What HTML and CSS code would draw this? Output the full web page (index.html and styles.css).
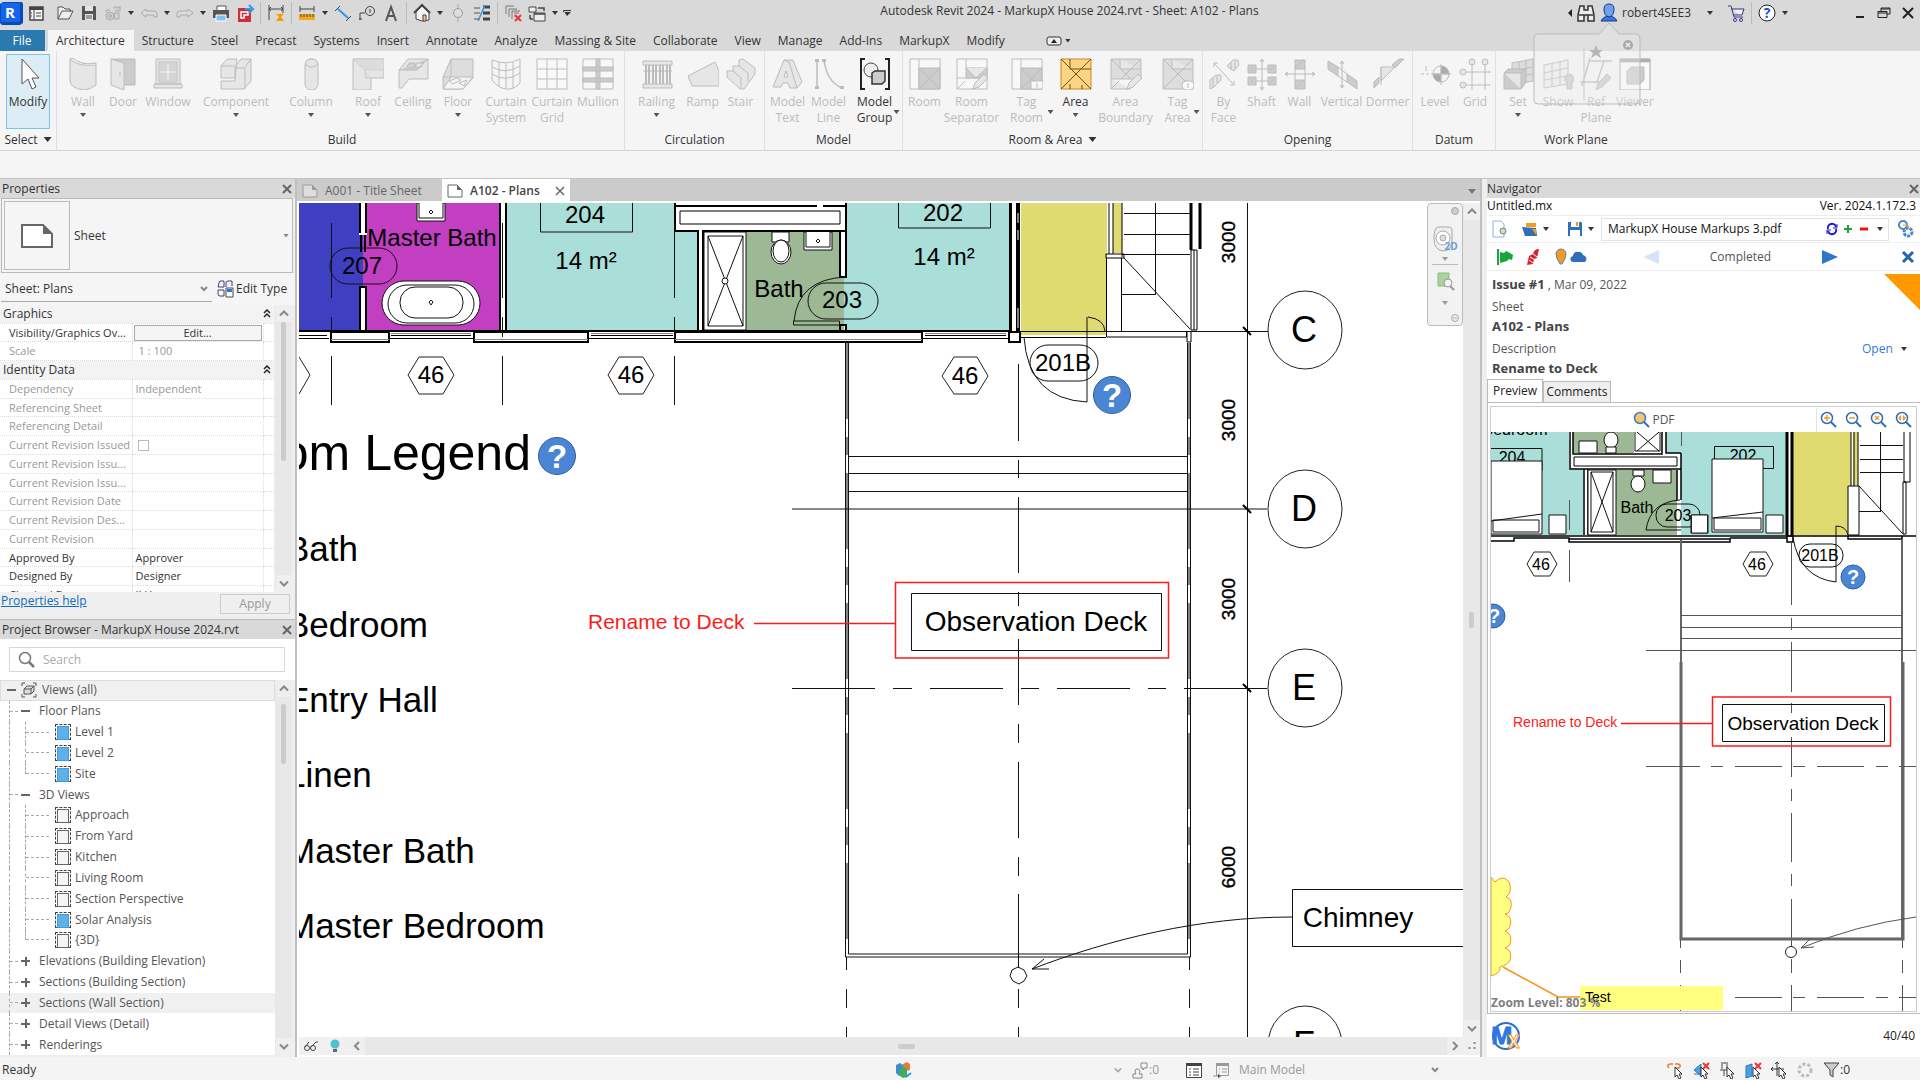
FILE: index.html
```html
<!DOCTYPE html>
<html lang="en">
<head>
    <meta charset="UTF-8">
    <meta name="viewport" content="width=device-width, initial-scale=1.0">
    <title>Autodesk Revit 2024 - MarkupX House 2024.rvt - Sheet: A102 - Plans</title>
    <link rel="stylesheet" href="styles.css">
</head>
<body>
    <header class="titlebar">
        <div class="quick-access">
            <button class="tool" aria-label="Revit"><svg width="24" height="26" viewBox="0 0 24 26"><path d="M0 4l3-2h19l1 2v19l-3 2H2l-2-2z" fill="#0a49b8"/><path d="M1 3h19v19H1z" fill="#1565ec"/><text x="10" y="18" class="logo-letter">R</text></svg></button>
            <button class="tool" aria-label="Home"><svg width="24" height="24" viewBox="0 0 24 24"><path d="M6 6h13v13H6z" fill="#f4f4f4" stroke="#444" stroke-width="1.5"/><path d="M5 6h14v3H5z" fill="#444"/><path d="M10 9v10M12 12h5M12 15h5M7 12h1M7 15h1" stroke="#444"/></svg></button>
            <button class="tool tool-first" aria-label="Open"><svg width="24" height="24" viewBox="0 0 24 24"><path d="M5 18V6h5l2 2h5v3M5 18l4-8h11l-4 8z" fill="#eee" stroke="#555"/></svg></button>
            <button class="tool" aria-label="Save"><svg width="24" height="24" viewBox="0 0 24 24"><path d="M5 5h13l1 1v13H5z" fill="#555"/><path d="M8 5h8v5H8zM8 13h8v6H8z" fill="#e4e4e4"/><path d="M9 15h6M9 17h6" stroke="#555"/></svg></button>
            <button class="tool" aria-label="Synchronize"><svg width="24" height="24" viewBox="0 0 24 24" fill="#d0d0d0" stroke="#aaa"><circle cx="9" cy="15" r="4"/><circle cx="9" cy="15" r="1.5"/><path d="M12 7q3-3 5 0l2-2v5h-5M13 12h5v6h-4zM5 11V9h4"/></svg></button>
            <span class="caret"></span>
            <button class="tool" aria-label="Undo"><svg width="24" height="24" viewBox="0 0 24 24" fill="#ddd" stroke="#aaa"><path d="M4 12l5-4v2h8q3 0 3 3v3h-3v-2H9v2z"/></svg></button>
            <span class="caret"></span>
            <button class="tool" aria-label="Redo"><svg width="24" height="24" viewBox="0 0 24 24" fill="#ddd" stroke="#aaa"><path d="M20 12l-5-4v2H7q-3 0-3 3v3h3v-2h8v2z"/></svg></button>
            <span class="caret"></span>
            <button class="tool" aria-label="Print"><svg width="24" height="24" viewBox="0 0 24 24"><path d="M8 5h9v5H8z" fill="#fff" stroke="#555"/><path d="M4 9h16v8H4z" fill="#555"/><path d="M7 14h10v6H7z" fill="#7fc3f5" stroke="#fff"/></svg></button>
            <button class="tool" aria-label="Export PDF"><svg width="24" height="24" viewBox="0 0 24 24"><path d="M5 7h13v14H5z" fill="#c8313a"/><path d="M8 17v-6h7v3h-4v3z" fill="none" stroke="#fff" stroke-width="1.5"/><path d="M12 8h6M16 4l4 4-4 4" fill="none" stroke="#2b98f0" stroke-width="2"/></svg></button>
            <span class="sep"></span>
            <button class="tool" aria-label="Aligned dimension"><svg width="24" height="24" viewBox="0 0 24 24"><path d="M5 4v15M19 4v8M5 8h14M7 6L5 8l2 2M17 6l2 2-2 2" fill="none" stroke="#444"/><path d="M12 13h8l-3 3 3 4h-8l3-4z" fill="#f59a00"/></svg></button>
            <span class="sep"></span>
            <button class="tool" aria-label="Measure"><svg width="24" height="24" viewBox="0 0 24 24"><path d="M5 5v6M19 5v6M5 8h14" stroke="#444"/><path d="M4 13h16v6H4z" fill="#f5a81c"/><path d="M6 13v3M9 13v3M12 13v3M15 13v3M18 13v3" stroke="#444"/></svg></button>
            <span class="caret"></span>
            <button class="tool" aria-label="Dimension"><svg width="24" height="24" viewBox="0 0 24 24"><path d="M4 10l5-5M15 20l5-5" stroke="#444"/><path d="M7 8l10 9" stroke="#2b98f0" stroke-width="2"/></svg></button>
            <button class="tool" aria-label="Tag"><svg width="24" height="24" viewBox="0 0 24 24" fill="none" stroke="#444"><circle cx="15" cy="10" r="4.5"/><path d="M15 8v4M5 19v-7h5M4 18h3"/></svg></button>
            <button class="tool" aria-label="Text"><svg width="24" height="24" viewBox="0 0 24 24" fill="none" stroke="#555" stroke-width="2"><path d="M7 20l5-14 5 14M9 15h6"/></svg></button>
            <span class="sep"></span>
            <button class="tool" aria-label="Default 3D view"><svg width="24" height="24" viewBox="0 0 24 24"><path d="M6 11l6-6 7 6v8l-7 1-6-2z" fill="#f4f4f4" stroke="#444"/><path d="M4 12l8-8 8 8" fill="none" stroke="#444" stroke-width="2"/><path d="M13 14h3v6h-3z" fill="#f5c86a" stroke="#444"/></svg></button>
            <span class="caret"></span>
            <button class="tool" aria-label="Section"><svg width="24" height="24" viewBox="0 0 24 24"><path d="M12 3v18M7 12l5-5 5 5" stroke="#aaa" fill="#bbb"/><circle cx="12" cy="12" r="4.5" fill="#ddd" stroke="#999"/></svg></button>
            <button class="tool" aria-label="Thin lines"><svg width="24" height="24" viewBox="0 0 24 24"><path d="M4 7h6M4 12h6M4 18h6" stroke="#555"/><path d="M13 6h7M13 12h7M13 18h7" stroke="#444" stroke-width="3"/><path d="M15 4L8 20" stroke="#2b98f0" stroke-width="1.5"/></svg></button>
            <span class="sep"></span>
            <button class="tool" aria-label="Close inactive views"><svg width="24" height="24" viewBox="0 0 24 24"><path d="M5 13V5h8M8 16V8h8M11 18v-8h8" fill="none" stroke="#777"/><path d="M13 12h5M13 15h3" stroke="#777"/><path d="M14 14l6 6M20 14l-6 6" stroke="#e33" stroke-width="2"/></svg></button>
            <button class="tool" aria-label="Switch windows"><svg width="24" height="24" viewBox="0 0 24 24"><path d="M4 6h7v5H4zM9 12h11v8H9z" fill="#eee" stroke="#444"/><path d="M9 13h11M13 7h6v3M5 18h3M5 14v4" stroke="#444" fill="none" stroke-width="1.5"/></svg></button>
            <span class="caret"></span>
            <span class="caret caret-wide"></span>
        </div>
        <h1 class="title">Autodesk Revit 2024 - MarkupX House 2024.rvt - Sheet: A102 - Plans</h1>
        <div class="account">
            <svg width="8" height="12" viewBox="0 0 8 12"><path d="M6 2v8L2 6z" fill="#222"/></svg>
            <button class="tool" aria-label="Search"><svg width="24" height="24" viewBox="0 0 24 24" fill="#eee" stroke="#333" stroke-width="1.5"><path d="M6 5h4v4h4V5h4l2 9v6h-6v-6h-4v6H4v-6zM5 14h5M14 14h5"/></svg></button>
            <button class="user"><svg width="22" height="24" viewBox="0 0 22 24"><path d="M3 20q1-3 6-5h4q5 2 6 5z" fill="#3a7ae0" stroke="#123a80"/><path d="M11 3q5 0 5 5 0 7-5 8-5-1-5-8 0-5 5-5z" fill="#6ea2ee" stroke="#123a80"/></svg>robert4SEE3</button>
            <span class="caret caret-user"></span>
            <button class="tool" aria-label="App store"><svg width="24" height="24" viewBox="0 0 24 24" fill="#eef" stroke="#337"><path d="M4 5h3l3 11h9M7 8h13l-2 6H9"/><circle cx="11" cy="19" r="1.5"/><circle cx="17" cy="19" r="1.5"/></svg></button>
            <span class="sep"></span>
            <button class="tool" aria-label="Help"><svg width="24" height="24" viewBox="0 0 24 24"><circle cx="12" cy="12" r="8" fill="#fff" stroke="#222"/><text x="12" y="17" class="help-mark">?</text></svg></button>
            <span class="caret"></span>
        </div>
        <div class="window-buttons">
            <button class="tool" aria-label="Minimize"><svg width="24" height="24" viewBox="0 0 24 24"><path d="M8 16h8" stroke="#222" stroke-width="2"/></svg></button>
            <button class="tool" aria-label="Restore"><svg width="24" height="24" viewBox="0 0 24 24" fill="none" stroke="#222"><path d="M9 10V7h9v6h-3M6 10.5h9v6H6zM6 12h9M9 8h9"/></svg></button>
            <button class="tool" aria-label="Close"><svg width="24" height="24" viewBox="0 0 24 24"><path d="M7 7l10 10M17 7L7 17" stroke="#222" stroke-width="2"/></svg></button>
        </div>
    </header>

    <nav class="ribbon-tabs">
        <button class="tab tab-file">File</button>
        <button class="tab tab-active">Architecture</button>
        <button class="tab">Structure</button>
        <button class="tab">Steel</button>
        <button class="tab">Precast</button>
        <button class="tab">Systems</button>
        <button class="tab">Insert</button>
        <button class="tab">Annotate</button>
        <button class="tab">Analyze</button>
        <button class="tab">Massing &amp; Site</button>
        <button class="tab">Collaborate</button>
        <button class="tab">View</button>
        <button class="tab">Manage</button>
        <button class="tab">Add-Ins</button>
        <button class="tab">MarkupX</button>
        <button class="tab">Modify</button>
        <button class="tab tab-toggle" aria-label="Minimize ribbon"><svg width="16" height="10" viewBox="0 0 16 10"><rect x="1" y="1" width="14" height="8" rx="2" fill="#eee" stroke="#333"/><path d="M5 7h6L8 3z" fill="#222"/></svg><span class="caret"></span></button>
    </nav>

    <section class="ribbon">
        <div class="group group-select">
            <div class="buttons">
                <button class="big modify"><svg class="on" viewBox="0 0 32 32"><path d="M10 1v25l6-5 4 10 4-2-4-9h7z" fill="#fff" stroke="#555"/></svg><span>Modify</span></button>
            </div>
            <h2>Select <i class="caret-down"></i></h2>
        </div>
        <div class="group group-build">
            <div class="buttons">
                <button class="big w40" disabled><svg viewBox="0 0 32 32"><path d="M3 1q8 8 26 6v20q-6 5-13 5Q3 30 3 22z"/><path d="M3 1l3-1q8 8 23 5v2"/></svg><span>Wall</span><i class="drop"></i></button>
                <button class="big w40" disabled><svg viewBox="0 0 32 32"><path d="M4 1h24v26H17" fill="#ccc"/><path d="M4 1l13 4v27L4 27zM13 14v4"/></svg><span>Door</span></button>
                <button class="big w50" disabled><svg viewBox="0 0 32 32"><path d="M4 1h24v25H4zM7 4h18v20H7zM2 26h28v4H2z"/><path d="M8 5h7v8H8zM17 5h7v8h-7zM8 15h7v8H8zM17 15h7v8h-7z" fill="#d4d4d4" stroke="none"/></svg><span>Window</span></button>
                <button class="big w86" disabled><svg viewBox="0 0 32 32"><path d="M1 8l6-7h10l-2 19H1zM1 23h14V9l6-8h10v22l-7 8H1zM15 10h10V31M1 8h13M25 9l6-8"/></svg><span>Component</span><i class="drop"></i></button>
                <button class="big w64" disabled><svg viewBox="0 0 32 32"><rect x="10" y="1" width="13" height="31" rx="6"/><ellipse cx="16.5" cy="5" rx="6" ry="4"/></svg><span>Column</span><i class="drop"></i></button>
                <button class="big w50" disabled><svg viewBox="0 0 32 32"><path d="M1 1h31v19H19v12H1z"/><path d="M1 1l12 11h19V1zM13 12v8h6" fill="#dcdcdc" stroke-width=".5"/></svg><span>Roof</span><i class="drop"></i></button>
                <button class="big w40" disabled><svg viewBox="0 0 32 32"><path d="M2 12L11 1h20v20H12l-7 9H2z"/><path d="M2 12h18l11-11M12 5h6l-2 4h-6zM20 5h6l-2 4h-6z" fill="#ccc"/></svg><span>Ceiling</span></button>
                <button class="big w50" disabled><svg viewBox="0 0 32 32"><path d="M9 1h22v19L21 31H1V19L9 1zM9 1v18H1" fill="#ddd"/><path d="M9 19h22L21 31H1zM7 23l8-3 4 2-8 4zM17 25l8-3-3 6z" fill="#f4f4f4"/></svg><span>Floor</span><i class="drop"></i></button>
                <button class="big w46" disabled><svg viewBox="0 0 32 32"><path d="M2 2q15 6 28-1v24q-6 7-14 6T2 22zM2 9q14 8 28-1M2 16q14 9 28-1M9 4v24M16 5v26M23 4v26" fill="none"/></svg><span>Curtain<br>System</span></button>
                <button class="big w46" disabled><svg viewBox="0 0 32 32"><path d="M1 1h30v30H1zM11 1v30M21 1v30M1 11h30M1 21h30" fill="#f8f8f8"/></svg><span>Curtain<br>Grid</span></button>
                <button class="big w46" disabled><svg viewBox="0 0 32 32"><path d="M1 1h30v30H1z" fill="#f8f8f8"/><path d="M1 9h30v4H1zM1 20h30v4H1zM14 1h4v30h-4z" fill="#ccc"/></svg><span>Mullion</span></button>
            </div>
            <h2>Build</h2>
        </div>
        <div class="group group-circulation">
            <div class="buttons">
                <button class="big w54" disabled><svg viewBox="0 0 32 32"><path d="M2 3h29v4H2zM2 26h29v4H2z"/><path d="M5 7v19M8 7v19M12 7v19M15 7v19M19 7v19M22 7v19M26 7v19M29 7v19" stroke-width="2"/><path d="M2 13h29"/></svg><span>Railing</span><i class="drop"></i></button>
                <button class="big w38" disabled><svg viewBox="0 0 32 32"><path d="M1 18L28 4l4 9v15H5z"/></svg><span>Ramp</span></button>
                <button class="big w38" disabled><svg viewBox="0 0 32 32"><path d="M14 2l4-1 12 9v6L19 31h-4L2 19v-6h6V8h6z"/><path d="M8 13l8 7v10M14 8l9 7v8" fill="none"/></svg><span>Stair</span></button>
            </div>
            <h2>Circulation</h2>
        </div>
        <div class="group group-model">
            <div class="buttons">
                <button class="big w42" disabled><svg viewBox="0 0 32 32"><path d="M1 29L12 2h9l9 22-5 6h-7l-2-5h-5l-2 4zM12 19h4l-2-6z"/><path d="M12 2l5 2 8 26" fill="none"/></svg><span>Model<br>Text</span></button>
                <button class="big w40" disabled><svg viewBox="0 0 32 32"><path d="M4 2v28M11 2q3 22 18 28" fill="none" stroke-width="1.5"/><path d="M2 1h4v3H2zM9 1h4v3H9zM2 28h4v3H2zM27 28h4v3h-4z" fill="#bbb" stroke="none"/></svg><span>Model<br>Line</span></button>
                <button class="big w52"><svg class="on" viewBox="0 0 32 32"><path d="M6 1H2v30h4M26 1h4v30h-4" fill="none" stroke="#222" stroke-width="2"/><circle cx="12" cy="12" r="7" fill="#eee" stroke="#444"/><path d="M13 15l3-2h10v10l-3 3H13z" fill="#ccc" stroke="#333" stroke-width="1.5"/></svg><span>Model<br>Group</span><i class="drop drop-side"></i></button>
            </div>
            <h2>Model</h2>
        </div>
        <div class="group group-room">
            <div class="buttons">
                <button class="big w40" disabled><svg viewBox="0 0 32 32"><path d="M1 1h30v30H1zM10 1v30" fill="#f8f8f8"/><path d="M10 10h21v21H10z" fill="#ccc"/><path d="M10 10l21 21M31 10L10 31"/></svg><span>Room</span></button>
                <button class="big w54" disabled><svg viewBox="0 0 32 32"><path d="M1 1h30v30H1zM10 1v9M1 20h30M1 31l8-8" fill="#f8f8f8"/><path d="M10 10h21v10H10z" fill="#ccc"/><path d="M10 10l10 10 11-10M17 31l2-6 9-9 4 4-9 9z"/></svg><span>Room<br>Separator</span></button>
                <button class="big w56" disabled><svg viewBox="0 0 32 32"><path d="M1 1h30v30H1zM10 1v30" fill="#f8f8f8"/><path d="M10 10h21v21H10z" fill="#ccc"/><path d="M10 10l21 21M31 10L10 31"/><path d="M20 23h12v8H20z" fill="#f8f8f8"/><path d="M26 25v5"/></svg><span>Tag<br>Room</span><i class="drop drop-side"></i></button>
                <button class="big w42"><svg class="on" viewBox="0 0 32 32"><path d="M1 1h30v30H1z" fill="#ffd480" stroke="#c28a2a"/><path d="M10 1v10h21M10 26v5M1 1l30 30M31 1L1 31M22 31v-4" stroke="#6b4f1c" fill="none"/></svg><span>Area</span><i class="drop"></i></button>
                <button class="big w58" disabled><svg viewBox="0 0 32 32"><path d="M1 1h30v20H1z" fill="#ddd"/><path d="M1 21v10h20M1 1l20 20M31 1L11 21M10 1v10h21M1 31l8-8M17 31l2-6 9-9 4 4-9 9z"/></svg><span>Area<br>Boundary</span></button>
                <button class="big w46" disabled><svg viewBox="0 0 32 32"><path d="M1 1h30v30H1z" fill="#ddd"/><path d="M1 1l30 30M31 1L1 31M10 1v10h21"/><rect x="20" y="23" width="12" height="9" rx="4" fill="#f8f8f8"/><path d="M26 25v5"/></svg><span>Tag<br>Area</span><i class="drop drop-side"></i></button>
            </div>
            <h2>Room &amp; Area <i class="caret-down"></i></h2>
        </div>
        <div class="group group-opening">
            <div class="buttons">
                <button class="big w38" disabled><svg viewBox="0 0 32 32"><path d="M6 5l20 22M6 5v4M6 5h4M26 27v-4M26 27h-4M19 8l6-6h5l1 5-5 6zM2 22l6-5h5v5l-7 7-4 2z"/><path d="M23 4v8M27 3v8M5 20v9M9 18v7"/></svg><span>By<br>Face</span></button>
                <button class="big w38" disabled><svg viewBox="0 0 32 32"><path d="M2 7h8v8H2zM22 7h8v8h-8zM2 19h8v8H2zM22 19h8v8h-8z" fill="#ccc"/><path d="M16 2v29M14 4l2-3 2 3M14 29l2 3 2-3M4 13l4-4M4 25l4-4M24 13l4-4M24 25l4-4M10 11h12M10 23h12"/></svg><span>Shaft</span></button>
                <button class="big w38" disabled><svg viewBox="0 0 32 32"><path d="M11 2h10v9H11zM11 22h10v9H11z" fill="#ccc"/><path d="M11 10l9-8M11 30l9-8M11 11v11M21 11v11M1 16h30M4 14l-3 2 3 2M28 14l3 2-3 2"/></svg><span>Wall</span></button>
                <button class="big w46" disabled><svg viewBox="0 0 32 32"><path d="M2 3l10 6v9L2 11zM21 16l10 7v8l-10-7z" fill="#ccc"/><path d="M16 3v27M14 6l2-3 2 3M14 27l2 3 2-3M12 9l9 7M12 18l9 6"/></svg><span>Vertical</span></button>
                <button class="big w46" disabled><svg viewBox="0 0 32 32"><path d="M20 7l7-6h5l-9 9zM2 30v-6l5-5v6z" fill="#ccc"/><path d="M9 22V9h14L9 23M9 9v18"/></svg><span>Dormer</span></button>
            </div>
            <h2>Opening</h2>
        </div>
        <div class="group group-datum">
            <div class="buttons">
                <button class="big w42" disabled><svg viewBox="0 0 32 32"><circle cx="22" cy="16" r="8" fill="#f4f4f4"/><path d="M22 8a8 8 0 0 1 8 8h-8zM22 24a8 8 0 0 1-8-8h8z" fill="#aaa"/><path d="M2 16h3M7 16h3M22 6v21M12 16h20M7 8v5"/></svg><span>Level</span></button>
                <button class="big w38" disabled><svg viewBox="0 0 32 32"><path d="M13 7v25M26 7v25M7 14h25M7 27h25"/><circle cx="13" cy="4" r="3"/><circle cx="26" cy="4" r="3"/><circle cx="4" cy="14" r="3"/><circle cx="4" cy="27" r="3"/></svg><span>Grid</span></button>
            </div>
            <h2>Datum</h2>
        </div>
        <div class="group group-plane">
            <div class="buttons">
                <button class="big w42" disabled><svg viewBox="0 0 32 32"><path d="M10 5l21-4v22L10 27z" fill="#ddd"/><path d="M10 13l21-4M10 20l21-4M17 4v22M24 2v22"/><path d="M2 15l4-4h17v15l-4 5H2z" fill="#ccc"/><path d="M2 15h17v16M19 15l4-4"/></svg><span>Set</span><i class="drop"></i></button>
                <button class="big w38" disabled><svg viewBox="0 0 32 32"><path d="M2 7l24-5v24L2 30zM2 15l24-5M2 22l24-4M10 5v24M18 4v23" fill="#eee"/><path d="M27 16a5 5 0 0 1 3 9v6h-5v-6a5 5 0 0 1 2-9z" fill="#ccc"/></svg><span>Show</span></button>
                <button class="big w38" disabled><svg viewBox="0 0 32 32"><path d="M10 3h22M24 3L17 24M0 24h20M10 0L2 28" fill="none" stroke-width="1.5"/><path d="M16 32l2-7 9-9 4 4-9 9z" fill="#ccc"/></svg><span>Ref<br>Plane</span></button>
                <button class="big w40" disabled><svg viewBox="0 0 32 32"><path d="M1 1h30v31H1z" fill="#fafafa" stroke="#aaa"/><path d="M1 1h30v3H1z" fill="#aaa"/><path d="M8 13l4-4h13v13l-4 4H8z" fill="#ccc"/></svg><span>Viewer</span></button>
            </div>
            <h2>Work Plane</h2>
        </div>
        <!-- sign-in balloon fading out under the account name -->
        <svg class="balloon" width="112" height="84" viewBox="0 0 112 84"><path d="M6 12h61l10-11 10 11h17q4 0 4 4v62q0 4-4 4H6q-4 0-4-4V16q0-4 4-4z" fill="#eee" fill-opacity=".35" stroke="#bbb"/><circle cx="96" cy="23" r="5" fill="#aaa"/><path d="M94 21l4 4M98 21l-4 4" stroke="#eee" stroke-width="1.5"/><path d="M64 23l2 5h5l-4 3 2 5-5-3-5 3 2-5-4-3h5z" fill="#b5b5b5"/><path d="M52 24v55" stroke="#ccc"/></svg>
    </section>

    <main class="workspace">
        <aside class="left">
            <section class="properties">
                <h2 class="panel-title">Properties<button class="close" aria-label="Close Properties"><svg width="12" height="12" viewBox="0 0 12 12"><path d="M2 2l8 8M10 2l-8 8"/></svg></button></h2>
                <button class="type-selector">
                    <span class="thumb"><svg width="34" height="26" viewBox="0 0 34 26"><path d="M2 2h21l9 9v13H2z" fill="#fff" stroke="#666" stroke-width="2"/><path d="M23 2v9h9z" fill="#666"/></svg></span>
                    <span>Sheet</span>
                    <i class="caret caret-gray"></i>
                </button>
                <div class="instance">
                    <label class="hidden" for="instance">Instance</label>
                    <select id="instance"><option>Sheet: Plans</option></select>
                    <button class="edit-type"><svg width="18" height="18" viewBox="0 0 18 18" fill="#f4f4f4" stroke="#446"><path d="M2 3q0-2 2-2h3v6H1zM9 7V3q0-2 2-2h4v5M1 10h6v6H3q-2 0-2-2z"/><path d="M9 8h7v9H9z" fill="#fff"/><path d="M10 9h5v3h-5z" fill="#2d77d6" stroke="none"/></svg>Edit Type</button>
                </div>
                <div class="grid-wrap">
                    <div class="grid-scroll">
                        <table class="grid">
                            <colgroup><col class="col-name"><col class="col-value"><col class="col-link"></colgroup>
                            <tr class="cat"><th colspan="2">Graphics</th><td><svg class="collapse" width="8" height="10" viewBox="0 0 8 10"><path d="M1 4l3-3 3 3M1 8l3-3 3 3"/></svg></td></tr>
                            <tr><td>Visibility/Graphics Ov...</td><td class="has-button"><button class="edit">Edit...</button></td><td></td></tr>
                            <tr class="ro"><td>Scale</td><td class="scale">1 : 100</td><td></td></tr>
                            <tr class="cat"><th colspan="2">Identity Data</th><td><svg class="collapse" width="8" height="10" viewBox="0 0 8 10"><path d="M1 4l3-3 3 3M1 8l3-3 3 3"/></svg></td></tr>
                            <tr class="ro"><td>Dependency</td><td>Independent</td><td></td></tr>
                            <tr class="ro"><td>Referencing Sheet</td><td></td><td></td></tr>
                            <tr class="ro"><td>Referencing Detail</td><td></td><td></td></tr>
                            <tr class="ro"><td><label for="issued">Current Revision Issued</label></td><td><input type="checkbox" id="issued" disabled></td><td></td></tr>
                            <tr class="ro"><td>Current Revision Issu...</td><td></td><td></td></tr>
                            <tr class="ro"><td>Current Revision Issu...</td><td></td><td></td></tr>
                            <tr class="ro"><td>Current Revision Date</td><td></td><td></td></tr>
                            <tr class="ro"><td>Current Revision Des...</td><td></td><td></td></tr>
                            <tr class="ro"><td>Current Revision</td><td></td><td></td></tr>
                            <tr><td>Approved By</td><td>Approver</td><td></td></tr>
                            <tr><td>Designed By</td><td>Designer</td><td></td></tr>
                            <tr><td>Checked By</td><td>JLH</td><td></td></tr>
                        </table>
                    </div>
                    <div class="scrollbar"><svg class="chev" viewBox="0 0 10 10"><path d="M1 7l4-4 4 4"/></svg><span class="thumb-bar thumb-props"></span><svg class="chev" viewBox="0 0 10 10"><path d="M1 3l4 4 4-4"/></svg></div>
                </div>
                <div class="properties-foot">
                    <a href="#">Properties help</a>
                    <button class="apply" disabled>Apply</button>
                </div>
            </section>

            <section class="browser">
                <h2 class="panel-title">Project Browser - MarkupX House 2024.rvt<button class="close" aria-label="Close Project Browser"><svg width="12" height="12" viewBox="0 0 12 12"><path d="M2 2l8 8M10 2l-8 8"/></svg></button></h2>
                <div class="search-row">
                    <label class="search" for="search"><svg width="18" height="18" viewBox="0 0 18 18"><circle cx="7" cy="7" r="5.5" fill="none" stroke="#777" stroke-width="1.5"/><path d="M11 11l5 5" stroke="#777" stroke-width="2.5"/></svg><input type="text" id="search" placeholder="Search"></label>
                </div>
                <div class="tree-wrap">
                    <ul class="tree">
                        <li class="root"><b class="minus"></b><svg width="16" height="16" viewBox="0 0 16 16" fill="none" stroke="#555"><path d="M4 1H1v3M12 1h3v3M4 15H1v-3M12 15h3v-3"/><path d="M3 7l3-3h7v5l-3 3H3zM3 7h7v5M10 7l3-3" fill="#ddd"/></svg>Views (all)</li>
                        <li><i class="branch"></i><b class="minus"></b>Floor Plans</li>
                        <li class="leaf"><i class="branch"></i><i class="branch"></i><span class="view-icon filled"></span>Level 1</li>
                        <li class="leaf"><i class="branch"></i><i class="branch"></i><span class="view-icon filled"></span>Level 2</li>
                        <li class="leaf last"><i class="branch"></i><i class="branch"></i><span class="view-icon filled"></span>Site</li>
                        <li><i class="branch"></i><b class="minus"></b>3D Views</li>
                        <li class="leaf"><i class="branch"></i><i class="branch"></i><span class="view-icon"></span>Approach</li>
                        <li class="leaf"><i class="branch"></i><i class="branch"></i><span class="view-icon"></span>From Yard</li>
                        <li class="leaf"><i class="branch"></i><i class="branch"></i><span class="view-icon"></span>Kitchen</li>
                        <li class="leaf"><i class="branch"></i><i class="branch"></i><span class="view-icon"></span>Living Room</li>
                        <li class="leaf"><i class="branch"></i><i class="branch"></i><span class="view-icon"></span>Section Perspective</li>
                        <li class="leaf"><i class="branch"></i><i class="branch"></i><span class="view-icon filled"></span>Solar Analysis</li>
                        <li class="leaf last"><i class="branch"></i><i class="branch"></i><span class="view-icon"></span>{3D}</li>
                        <li><i class="branch"></i><b class="plus"></b>Elevations (Building Elevation)</li>
                        <li><i class="branch"></i><b class="plus"></b>Sections (Building Section)</li>
                        <li class="hover"><i class="branch"></i><b class="plus"></b>Sections (Wall Section)</li>
                        <li><i class="branch"></i><b class="plus"></b>Detail Views (Detail)</li>
                        <li><i class="branch"></i><b class="plus"></b>Renderings</li>
                    </ul>
                    <div class="scrollbar"><svg class="chev" viewBox="0 0 10 10"><path d="M1 7l4-4 4 4"/></svg><span class="thumb-bar thumb-tree"></span><svg class="chev" viewBox="0 0 10 10"><path d="M1 3l4 4 4-4"/></svg></div>
                </div>
            </section>
        </aside>

        <section class="center">
            <div class="view-tabs">
                <button class="view-tab"><svg width="16" height="14" viewBox="0 0 16 14"><path d="M1 1h9l5 5v7H1z" fill="#ddd" stroke="#999"/><path d="M10 1v5h5" fill="#999"/></svg>A001 - Title Sheet</button>
                <button class="view-tab view-tab-active"><svg width="16" height="14" viewBox="0 0 16 14"><path d="M1 1h9l5 5v7H1z" fill="#fff" stroke="#666"/><path d="M10 1v5h5" fill="#666"/></svg>A102 - Plans<svg class="tab-x" width="10" height="10" viewBox="0 0 10 10"><path d="M1 1l8 8M9 1L1 9"/></svg></button>
                <span class="caret-down tabs-more"></span>
            </div>
            <div class="sheet-row">
                <div class="sheet-view">
                    <svg class="drawing" viewBox="299 203 1164 834" preserveAspectRatio="xMinYMin slice">
                        <!-- room fills -->
                        <path d="M299 203h60v32h4v52h-4v44h-60z" fill="#3f3fc1"/>
                        <path d="M367 203h133v128H367v-44h-4V235h4z" fill="#c23fc2"/>
                        <path d="M507 203h168v28h23v100H507z" fill="#aaded8"/>
                        <path d="M746 231h94v46h4v54h-98z" fill="#9cb894"/>
                        <path d="M846 203h163v128H846v-6h-2v-48h2z" fill="#aaded8"/>
                        <path d="M1021 203h86v54h-1v78h-85zM1113 203h9v50h-9z" fill="#e0db70"/>
                        <!-- interior walls -->
                        <g class="wall">
                            <path d="M360 203v30M366 203v30M360 331v-44h6v44M361 235v17M365 235v17"/>
                            <path d="M500 203v128M506 203v128"/>
                            <path d="M675 203v28h23v100M703 331V231h136M703 231h143V203M675 206h142M823 206h23M846 231v46h-6v-46M840 325h6v6h-6zM846 325v6"/>
                            <path d="M680 211h160v13H680z" class="thin"/>
                            <path d="M1010 203v134M1011 203v128"/>
                            <path d="M1017 203v128M1019 203v128"/>
                            <path d="M1109 203v51M1113 203v51M1122 203v54M1106 254h18v4h-18z" class="thin"/>
                            <path d="M1106.5 258v73M1121.5 258v73" class="thin"/>
                            <path d="M1191 203v47M1200 203v46" stroke-width="3"/>
                            <path d="M1191 250h6v80h-6zM1194 250v80" class="thin"/>
                        </g>
                        <path d="M1018 213v10M1018 230v10M1018 308v20" stroke="#fff"/>
                        <!-- stair -->
                        <path class="line" d="M1124 213.5h66M1124 234.5h66M1122 254.5h68M1155.5 203v91M1122 294.5h34M1124 258l66 71"/>
                        <!-- exterior wall -->
                        <path class="line" d="M846 331.5h422"/>
                        <g class="wall">
                            <path d="M299 331h710"/>
                            <path d="M331 332h58v10h-58zM474 332h114v10H474zM675 332h247v10H675zM1009 332h11v10h-11z" fill="#fff"/>
                            <path class="thin" d="M299 335.5h28M299 338.5h30M391 335.5h80M389 338.5h85M591 335.5h82M588 338.5h87M925 335.5h81M922 338.5h86M1021 337.5h85M1106.5 332v5h80v-5M1187 332v10h4v-10"/>
                        </g>
                        <path d="M331 339.5h58M474 339.5h114M675 339.5h247M391 333.5h80M591 333.5h82M925 333.5h81" stroke="#888"/>
                        <path d="M1022 332h84v3h-84z" fill="#e0db70"/>
                        <!-- fixtures -->
                        <g class="fixture">
                            <path d="M417 203h28v18h-28z"/><path d="M419 203v15h24v-15M429 212l2-2 2 2-2 2z"/>
                            <rect x="382" y="281" width="98" height="44" rx="22"/><rect x="388" y="285" width="86" height="38" rx="19"/><rect x="400" y="287" width="63" height="31" rx="15"/><path d="M429 302l2-2 2 2-2 3z"/>
                            <path d="M704 232h42v98h-42z"/><path d="M708 236h35v90h-35zM708 236l35 90M743 236l-35 90"/><circle cx="725" cy="281" r="3"/>
                            <path d="M772 232h17v10h-17z"/><ellipse cx="781" cy="252" rx="10" ry="12"/><ellipse cx="781" cy="251" rx="8" ry="11"/>
                            <path d="M804 232h28v18h-28z"/><path d="M806 232v15h24v-15M816 241l2-2 2 2-2 2z"/>
                        </g>
                        <path class="line" d="M540.5 203v29h92v-29M898.5 203v25h92v-25M793.5 321h46v4h-46zM794 321q4-42 52-44"/>
                        <path class="line" d="M1087 317v85M1088 317q16 2 17 14M1024 337q4 62 63 65"/>
                        <!-- grid lines -->
                        <path class="line" d="M331.5 223v75M331.5 317v14M331.5 356v49M502.5 223v75M502.5 317v20M502.5 356v49M674.5 223v75M674.5 317v20M674.5 356v49"/>
                        <path class="line" d="M1018.5 364v77M1018.5 460v18M1018.5 497v76M1018.5 592v14M1018.5 639v66M1018.5 724v19M1018.5 762v76M1018.5 857v19M1018.5 894v74M1018.5 989v19M1018.5 1027v10"/>
                        <path class="line" d="M792 509h475M792 688.5h83M893 688.5h19M930 688.5h73M1021 688.5h18M1057 688.5h73M1148 688.5h18M1184 688.5h83"/>
                        <path class="line" d="M1247.5 203v834"/>
                        <path d="M1243 327l8 8M1243 505l8 8M1243 684l8 8" stroke="#000" stroke-width="2"/>
                        <!-- deck -->
                        <path class="line" d="M845.5 343v614h345V343M848.5 343v611h339V343M849 456.5h338M849 473.5h338M849 491.5h338"/>
                        <path class="line" d="M847 343v614M1189 343v614" stroke-dasharray="76 18 18 18"/>
                        <path class="line" d="M846.5 957v13M846.5 989v19M846.5 1027v10M1189.5 957v13M1189.5 989v19M1189.5 1027v10"/>
                        <path class="line" d="M1010 976l2-6 6-3 6 3 3 6-3 5-5 3-6-3z"/>
                        <path class="line" d="M1292 917C1200 917 1110 939 1032 969M1044 959l-12 10h17"/>
                        <!-- grid bubbles -->
                        <ellipse class="bubble" cx="1305" cy="330" rx="37" ry="39"/><text class="grid-name" x="1304" y="342">C</text>
                        <ellipse class="bubble" cx="1305" cy="509" rx="37" ry="39"/><text class="grid-name" x="1304" y="521">D</text>
                        <ellipse class="bubble" cx="1305" cy="688" rx="37" ry="39"/><text class="grid-name" x="1304" y="700">E</text>
                        <ellipse class="bubble" cx="1305" cy="1045" rx="37" ry="39"/><text class="grid-name" x="1304" y="1057">F</text>
                        <text class="dim" transform="translate(1235 242) rotate(-90)">3000</text>
                        <text class="dim" transform="translate(1235 420) rotate(-90)">3000</text>
                        <text class="dim" transform="translate(1235 599) rotate(-90)">3000</text>
                        <text class="dim" transform="translate(1235 867) rotate(-90)">6000</text>
                        <!-- window tags -->
                        <path class="bubble" d="M264 375l11-18h24l11 18-11 19h-24zM408 375l11-18h24l11 18-11 19h-24zM608 375l11-18h24l11 18-11 19h-24zM942 376l12-19h23l11 19-11 18h-23z"/>
                        <text class="tag" x="285" y="383">46</text><text class="tag" x="431" y="383">46</text><text class="tag" x="631" y="383">46</text><text class="tag" x="965" y="384">46</text>
                        <!-- room and door tags -->
                        <rect class="line" x="330" y="248" width="67" height="36" rx="18"/><text class="tag" x="362" y="274">207</text>
                        <rect class="line" x="808" y="283" width="70" height="36" rx="18"/><text class="tag" x="842" y="308">203</text>
                        <rect class="line" x="1030" y="345" width="68" height="36" rx="18"/><text class="tag" x="1063" y="371">201B</text>
                        <text class="tag" x="432" y="246">Master Bath</text>
                        <text class="tag" x="585" y="223">204</text><text class="tag" x="586" y="269">14 m²</text>
                        <text class="tag" x="779" y="297">Bath</text>
                        <text class="tag" x="943" y="221">202</text><text class="tag" x="944" y="265">14 m²</text>
                        <!-- legend -->
                        <text class="legend-title" x="531" y="470">Room Legend</text>
                        <text class="legend" x="286" y="561">Bath</text>
                        <text class="legend" x="286" y="637">Bedroom</text>
                        <text class="legend" x="286" y="712">Entry Hall</text>
                        <text class="legend" x="286" y="787">Linen</text>
                        <text class="legend" x="286" y="863">Master Bath</text>
                        <text class="legend" x="286" y="938">Master Bedroom</text>
                        <!-- notes and markups -->
                        <path class="line" d="M911.5 593.5h250v57h-250zM1463 889.5h-170.5v57H1463"/>
                        <text class="note" x="1036" y="631">Observation Deck</text>
                        <text class="note" x="1358" y="927">Chimney</text>
                        <path class="markup" d="M895.5 582.5h273V658h-273zM754 623.5h141"/>
                        <text class="markup-text" x="588" y="629">Rename to Deck</text>
                        <circle class="query" cx="557" cy="456" r="18.5"/><text class="query-mark" x="557" y="468">?</text>
                        <circle class="query" cx="1112" cy="395" r="18.5"/><text class="query-mark" x="1112" y="407">?</text>
                    </svg>
                    <div class="nav-bar">
                        <svg width="34" height="121" viewBox="0 0 34 121"><circle cx="27" cy="7" r="3.5" fill="#ccc" stroke="#aaa"/><path d="M10 23h11q3 0 3 3v10q0 11-9 11-9-1-9-12 0-12 4-12z" fill="#eee" stroke="#aaa"/><circle cx="15" cy="34" r="7" fill="#fff" stroke="#aaa"/><circle cx="15" cy="34" r="3" fill="#ddd" stroke="#aaa"/><text class="nav-2d" x="23" y="46">2D</text><path d="M14 53h6l-3 4zM14 97h6l-3 4z" fill="#999"/><path d="M4 60.5h26" stroke="#bbb"/><path d="M10 69h11v13H10z" fill="#a8d49c" stroke="#8aba7e"/><circle cx="20" cy="79" r="4" fill="#f4f4f4" stroke="#999"/><path d="M22 82l4 4" stroke="#999" stroke-width="2"/><circle cx="27" cy="114" r="3.5" fill="#eee" stroke="#aaa"/><path d="M25 114h4" stroke="#aaa"/></svg>
                    </div>
                </div>
                <div class="scrollbar scrollbar-sheet"><svg class="chev" viewBox="0 0 10 10"><path d="M1 7l4-4 4 4"/></svg><span class="thumb-bar thumb-sheet"></span><svg class="chev" viewBox="0 0 10 10"><path d="M1 3l4 4 4-4"/></svg></div>
            </div>
            <div class="view-controls">
                <button class="tool" aria-label="Temporary hide"><svg width="20" height="16" viewBox="0 0 20 16" fill="none" stroke="#444"><circle cx="6" cy="10" r="2.5"/><circle cx="12" cy="10" r="2.5"/><path d="M4 9l4-5M10 9l5-5h2"/></svg></button>
                <button class="tool" aria-label="Reveal hidden"><svg width="16" height="16" viewBox="0 0 16 16"><circle cx="8" cy="6" r="4.5" fill="#4fc0cf"/><path d="M6 11h4v3H6z" fill="#666"/></svg></button>
                <svg class="chev chev-side" viewBox="0 0 10 10"><path d="M7 1L3 5l4 4"/></svg>
                <div class="h-track"><span class="h-thumb"></span></div>
                <svg class="chev chev-side" viewBox="0 0 10 10"><path d="M3 1l4 4-4 4"/></svg>
                <svg class="grip" width="14" height="14" viewBox="0 0 14 14"><path d="M9 3h2v2H9zM9 8h2v2H9zM4 8h2v2H4z" fill="#888"/></svg>
            </div>
        </section>

        <aside class="navigator">
            <h2 class="panel-title">Navigator<button class="close" aria-label="Close Navigator"><svg width="12" height="12" viewBox="0 0 12 12"><path d="M2 2l8 8M10 2l-8 8"/></svg></button></h2>
            <div class="file-row"><span>Untitled.mx</span><span>Ver. 2024.1.172.3</span></div>
            <div class="nav-tools">
                <button class="tool" aria-label="New"><svg width="20" height="20" viewBox="0 0 20 20"><path d="M4 2h8l3 3v13H4z" fill="#fff" stroke="#8ab4e0"/><circle cx="14" cy="12" r="3" fill="#f8d38a" stroke="#4a86c8"/></svg></button>
                <button class="tool-menu" aria-label="Open file"><svg width="20" height="20" viewBox="0 0 20 20"><path d="M6 4h10v4H6z" fill="#f59a1c"/><path d="M2 8l14 1 1 8H5z" fill="#2d6fb8"/><path d="M12 10h4v6" fill="#f59a1c"/></svg><i class="caret"></i></button>
                <button class="tool-menu" aria-label="Save file"><svg width="20" height="20" viewBox="0 0 20 20"><path d="M3 3h13l1 1v13H3z" fill="#2d6fb8"/><path d="M6 3h8v5H6zM5 11h10v6H5z" fill="#fff"/><path d="M11 3h2v4h-2z" fill="#f59a1c"/></svg><i class="caret"></i></button>
                <div class="file-box">
                    <label class="hidden" for="pdf">Markup file</label>
                    <select id="pdf"><option>MarkupX House Markups 3.pdf</option></select>
                    <button aria-label="Refresh"><svg width="16" height="16" viewBox="0 0 16 16" fill="none" stroke="#1a1ae0" stroke-width="2"><path d="M4 8a4 4 0 0 1 8-2M12 8a4 4 0 0 1-8 2"/><path d="M13 3v4h-4M3 13V9h4" stroke-width="1"/></svg></button>
                    <button aria-label="Add"><svg width="16" height="16" viewBox="0 0 16 16"><path d="M8 4v8M4 8h8" stroke="#19a53a" stroke-width="2"/></svg></button>
                    <button aria-label="Remove"><svg width="16" height="16" viewBox="0 0 16 16"><path d="M4 8h8" stroke="#e11" stroke-width="3"/></svg></button>
                    <i class="caret caret-box"></i>
                </div>
                <button class="tool" aria-label="Settings"><svg width="20" height="20" viewBox="0 0 20 20" fill="none"><circle cx="7" cy="6" r="4" stroke="#4a86c8" stroke-width="2"/><circle cx="12" cy="13" r="4" stroke="#4a86c8" stroke-width="3" stroke-dasharray="3 1"/><path d="M7 6h5v3" stroke="#f59a1c"/></svg></button>
            </div>
            <div class="nav-filter">
                <button aria-label="Flag"><svg width="20" height="20" viewBox="0 0 20 20"><path d="M3 2v16" stroke="#19a53a" stroke-width="2"/><path d="M5 5l4 1 2-2 4 2 3 2-1 5-3-1-2 2-7 2z" fill="#19a53a"/></svg></button>
                <button aria-label="Markup"><svg width="20" height="20" viewBox="0 0 20 20"><path d="M16 2l-2 9-3 1-1 5-6 1 2-9 4-2q1-5 6-5z" fill="#d8202f"/><path d="M9 6l5 4M7 10l5 3M6 13l4 3" stroke="#fff"/></svg></button>
                <button aria-label="Pin"><svg width="20" height="20" viewBox="0 0 20 20"><path d="M10 2a5 5 0 0 1 5 5q0 4-4 10H9Q5 11 5 7a5 5 0 0 1 5-5z" fill="#f59a1c" stroke="#4a86c8"/></svg></button>
                <button class="cloud" aria-label="Cloud"><svg width="20" height="20" viewBox="0 0 20 20"><path d="M5 15a3 3 0 0 1-1-6 4 4 0 0 1 5-4 4 4 0 0 1 5 3 4 4 0 0 1 2 7z" fill="#2d6fb8"/></svg></button>
                <button class="prev" aria-label="Previous"><svg width="20" height="16" viewBox="0 0 20 16"><path d="M18 1v14L2 8z" fill="#d6e5f5"/></svg></button>
                <span class="state">Completed</span>
                <button class="next" aria-label="Next"><svg width="20" height="16" viewBox="0 0 20 16"><path d="M2 1v14l16-7z" fill="#2d77c8"/></svg></button>
                <button class="clear" aria-label="Clear"><svg width="16" height="16" viewBox="0 0 16 16"><path d="M3 3l10 10M13 3L3 13" stroke="#2467b0" stroke-width="3"/></svg></button>
            </div>
            <div class="issue">
                <svg class="corner" width="36" height="36" viewBox="0 0 36 36"><path d="M0 0h36v36z" fill="#ff9900"/></svg>
                <p><strong>Issue #1</strong> , Mar 09, 2022</p>
                <p class="caption">Sheet</p>
                <p><strong>A102 - Plans</strong></p>
                <div class="status-line caption"><p>Description</p><label class="hidden" for="status">Status</label><select id="status"><option>Open</option></select><i class="caret"></i></div>
                <p><strong>Rename to Deck</strong></p>
            </div>
            <div class="tabs">
                <button class="page-tab page-tab-active">Preview</button>
                <button class="page-tab">Comments</button>
            </div>
            <div class="tab-page">
                <div class="preview-box">
                    <div class="preview-tools">
                        <button class="pdf"><svg width="18" height="18" viewBox="0 0 18 18"><circle cx="8" cy="7" r="5.5" fill="#f9c46b" stroke="#3d7cc9" stroke-width="1.5"/><path d="M12 11l5 5" stroke="#2d6fb8" stroke-width="2"/></svg>PDF</button>
                        <div class="zooms">
                            <button aria-label="Zoom in"><svg width="18" height="18" viewBox="0 0 18 18"><circle cx="7" cy="7" r="5.5" fill="#fff" stroke="#2d6fb8" stroke-width="1.5"/><path d="M11 11l5 5" stroke="#2d6fb8" stroke-width="2"/><path d="M4 7h6M7 4v6" stroke="#f59a1c" stroke-width="1.5"/></svg></button>
                            <button aria-label="Zoom out"><svg width="18" height="18" viewBox="0 0 18 18"><circle cx="7" cy="7" r="5.5" fill="#fff" stroke="#2d6fb8" stroke-width="1.5"/><path d="M11 11l5 5" stroke="#2d6fb8" stroke-width="2"/><path d="M4 7h6" stroke="#f59a1c" stroke-width="1.5"/></svg></button>
                            <button aria-label="Zoom all"><svg width="18" height="18" viewBox="0 0 18 18"><circle cx="7" cy="7" r="5.5" fill="#fff" stroke="#2d6fb8" stroke-width="1.5"/><path d="M11 11l5 5" stroke="#2d6fb8" stroke-width="2"/><path d="M5 5l4 4M9 5L5 9" stroke="#f59a1c" stroke-width="1.5"/></svg></button>
                            <button aria-label="Zoom width"><svg width="18" height="18" viewBox="0 0 18 18"><circle cx="7" cy="7" r="5.5" fill="#fff" stroke="#2d6fb8" stroke-width="1.5"/><path d="M11 11l5 5" stroke="#2d6fb8" stroke-width="2"/><path d="M6 4v6L3 7zM8 4v6l3-3z" fill="#f59a1c"/></svg></button>
                        </div>
                    </div>
                    <div class="preview">
                        <svg class="drawing" viewBox="1491 432 425 579" preserveAspectRatio="xMinYMin slice">
                            <path d="M1491 432h78v37h14v66h-92zM1666 432h120v103h-105v-82h-15z" fill="#aaded8"/>
                            <path d="M1573 432h61v21h-61zM1616 470h61v65h-61z" fill="#9cb894"/>
                            <path d="M1793 432h58v53h-3v50h-55zM1853 432h5v53h-5z" fill="#e0db70"/>
                            <text class="tag-small" x="1515" y="435">Bedroom</text>
                            <path class="line" d="M1491 448.5h51v22M1714.5 446.5h59v22h-59z"/>
                            <text class="tag-small" x="1512" y="463">204</text><text class="tag-small" x="1743" y="461">202</text>
                            <g class="wall wall-small">
                                <path d="M1570 432v37h14v66M1681 453h-15v-21M1662 432v22h-89v-22M1681 453v16h-111v-15M1588 535v-66M1681 469v31M1677 470v30"/>
                                <path d="M1787 432v103M1792 432v103" stroke-width="3"/>
                                <path d="M1851 432v54M1854 432v54M1858 432v54M1848 486h11v49h-11zM1904 432v50h6v-50M1903 482h3v52h-3z" class="thin"/>
                                <path d="M1574 457h103v9h-103z" class="thin"/>
                                <path d="M1491 536h425"/>
                                <path d="M1491 541h23v-3h55v4h112M1569 539h161v3h-112M1730 538h57M1787 536h6v6h-6zM1848 536v3h54v-3"/>
                            </g>
                            <g class="fixture">
                                <path d="M1491 461h51v73h-51zM1493 520h46v12h-46zM1491 521l51-7M1549 515h17v19h-17z"/>
                                <path d="M1712 459h51v73h-51zM1714 518h47v12h-47zM1712 518l51-6M1691 515h17v18h-17zM1766 515h17v18h-17z"/>
                                <path d="M1579 441h18v12h-18zM1635 432v19h25v-19M1637 451l22-19M1659 451l-22-19"/><ellipse cx="1611" cy="440" rx="7" ry="8"/><path d="M1606 447h10v6h-10z"/>
                                <path d="M1588 470h28v65h-28zM1591 472h22v60h-22zM1591 472l22 60M1613 472l-22 60M1653 470h18v13h-18z"/><path d="M1633 470h11v6h-11z"/><ellipse cx="1638" cy="484" rx="7" ry="8"/>
                            </g>
                            <path class="line" d="M1860 445.5h43M1860 459.5h43M1860 472.5h43M1880.5 432v79M1859 511.5h22M1859 486l44 48M1646 530h35M1646 530q4-28 34-30M1836 526v56q-36-4-43-44M1836 526q10 0 12 9"/>
                            <text class="tag-small" x="1637" y="513">Bath</text>
                            <rect class="line" x="1656" y="504" width="44" height="23" rx="11"/><text class="tag-small" x="1678" y="521">203</text>
                            <path class="bubble" d="M1691.5 515h16v18h-16zM1527 564l7-12h16l7 12-7 12h-16zM1743 564l7-12h16l7 12-7 12h-16z"/>
                            <text class="tag-small" x="1541" y="570">46</text><text class="tag-small" x="1757" y="570">46</text>
                            <rect class="line" x="1799" y="544" width="44" height="23" rx="11"/><text class="tag-small" x="1820" y="561">201B</text>
                            <path class="line gray" d="M1569.5 432v8M1569.5 500v30M1569.5 550v32M1681.5 432v14M1791.5 542v63M1791.5 618v12M1791.5 642v50M1791.5 703v10M1791.5 737v40M1791.5 789v12M1791.5 813v49M1791.5 874v12M1791.5 899v48M1791.5 959v14M1791.5 985v26"/>
                            <path d="M1681 540v399h221V540" fill="none" stroke="#666" stroke-width="2"/>
                            <path d="M1681 662v277h222V662" fill="none" stroke="#666" stroke-width="3"/>
                            <path class="line gray" d="M1681 615.5h221M1681 627.5h221M1681 638.5h221M1646 650.5h270M1646 766.5h54M1711 766.5h12M1735 766.5h47M1793 766.5h12M1817 766.5h47M1876 766.5h12M1899 766.5h17M1735 997.5h47M1793 997.5h12M1817 997.5h47M1876 997.5h12M1899 997.5h17"/>
                            <path class="line gray" d="M1680.5 940v8M1680.5 960v13M1680.5 985v26M1902.5 940v8M1902.5 960v13M1902.5 985v26M1916 917q-60 8-115 31M1811 938l-10 10 13-1"/>
                            <circle class="bubble" cx="1791" cy="952" r="5.5"/>
                            <path class="line" d="M1722.5 704.5h162v37h-162z"/>
                            <text class="note-small" x="1803" y="730">Observation Deck</text>
                            <path class="markup" d="M1712.5 697h178v49h-178zM1621 723.5h91"/>
                            <text class="markup-small" x="1513" y="727">Rename to Deck</text>
                            <path d="M1491 877l4 5q8-8 14 0 4 10-3 15 8 2 4 13-1 4-5 4 8 3 5 12-1 4-5 5 8 3 5 13-1 3-5 4 8 3 5 12-2 5-10 7 1 6-9 9z" fill="#ffff80" stroke="#f7941d"/>
                            <path d="M1503 967l55 30h22" fill="none" stroke="#f7941d" stroke-width="1.5"/>
                            <path d="M1580 986h143v24h-143z" fill="#ffff80"/>
                            <text class="test" x="1585" y="1002">Test</text>
                            <circle class="query" cx="1853" cy="577" r="12"/><text class="query-small" x="1853" y="584">?</text>
                            <circle class="query" cx="1493" cy="616" r="12"/><text class="query-small" x="1494" y="623">?</text>
                        </svg>
                        <span class="zoom-level">Zoom Level: 803 %</span>
                    </div>
                </div>
            </div>
            <div class="nav-foot">
                <svg width="34" height="32" viewBox="0 0 34 32"><circle cx="16" cy="16" r="13" fill="none" stroke="#2d6fc8" stroke-width="2"/><text x="1" y="24" class="logo-m">M</text><text x="18" y="28" class="logo-x">X</text></svg>
                <span>40/40</span>
            </div>
        </aside>
    </main>

    <footer class="statusbar">
        <span class="ready">Ready</span>
        <svg width="18" height="18" viewBox="0 0 18 18"><path d="M2 4l4-2 3 2v9l-4 2-3-3z" fill="#3d8fc9"/><path d="M9 3l4-2 3 2v6l-4 1-3-1z" fill="#e0803a"/><path d="M6 8l4-2 3 2v8l-4 1-3-2z" fill="#3fae5a"/><path d="M12 16l5-4" stroke="#2b98f0" stroke-width="2"/></svg>
        <div class="status-center">
            <svg class="small-chev" viewBox="0 0 10 10"><path d="M1 3l4 4 4-4"/></svg>
            <span class="requests"><svg width="18" height="18" viewBox="0 0 18 18" fill="none" stroke="#888"><path d="M2 17v-4h3q-2-2 0-5 3-1 4 2 0 2-1 3h3v4zM10 2h6v5h-3l-1 2V7h-2z"/></svg>:0</span>
            <svg width="18" height="18" viewBox="0 0 18 18"><path d="M1.5 2.5h15v14h-15z" fill="#fff" stroke="#444"/><path d="M1 2h16v3H1z" fill="#444"/><path d="M4 8h2M8 8h6M4 11h2M8 11h6M4 14h2M8 14h6" stroke="#444"/></svg>
            <svg width="18" height="18" viewBox="0 0 18 18"><path d="M4.5 2.5h12v12h-12z" fill="#f4f4f4" stroke="#999"/><path d="M4 2h13v3H4z" fill="#999"/><path d="M7 8h1M10 8h5M7 11h1M10 11h5M1 15h8M6 13l3 2-3 2" stroke="#999"/></svg>
            <label class="hidden" for="model">Design option</label>
            <select id="model" disabled><option>Main Model</option></select>
        </div>
        <div class="status-right">
            <svg width="18" height="18" viewBox="0 0 18 18"><path d="M3 7q-3-3 1-4h3M9 3h3q4 1 1 4h-3" fill="none" stroke="#e0803a" stroke-width="1.5"/><path class="arrow" d="M9 6v10l2-2 2 4 2-1-2-4h3z"/></svg>
            <svg width="18" height="18" viewBox="0 0 18 18"><path d="M2 9l7-6v12zM2 13h10" fill="#4aa3e0" stroke="#2d77c8"/><path d="M11 2l6 6M17 2l-6 6" stroke="#e33" stroke-width="2"/><path class="arrow" d="M9 6v10l2-2 2 4 2-1-2-4h3z"/></svg>
            <svg width="18" height="18" viewBox="0 0 18 18"><path d="M3 2h7M4 3v5M9 3v5M2 9h9M6 9v6" stroke="#444"/><path class="arrow" d="M9 6v10l2-2 2 4 2-1-2-4h3z"/></svg>
            <svg width="18" height="18" viewBox="0 0 18 18"><path d="M2 5l6-2v12l-6 2z" fill="#4aa3e0" stroke="#2d77c8"/><path d="M11 2l6 6M17 2l-6 6" stroke="#e33" stroke-width="2"/><path class="arrow" d="M9 6v10l2-2 2 4 2-1-2-4h3z"/></svg>
            <svg width="18" height="18" viewBox="0 0 18 18"><path d="M7 1v14M1 8h13M5 3l2-2 2 2M3 6L1 8l2 2" stroke="#333" fill="none"/><path class="arrow" d="M9 6v10l2-2 2 4 2-1-2-4h3z"/></svg>
            <svg width="18" height="18" viewBox="0 0 18 18"><circle cx="9" cy="9" r="6" fill="none" stroke="#bbb" stroke-width="3" stroke-dasharray="3 2"/></svg>
            <span class="filter"><svg width="18" height="18" viewBox="0 0 18 18"><path d="M2 2h15l-6 7v7l-3-2V9z" fill="#ccc" stroke="#444"/></svg>:0</span>
        </div>
    </footer>
</body>
</html>
```

FILE: styles.css
```css
* {
    box-sizing: border-box;
}
body {
    margin: 0;
    height: 100vh;
    display: flex;
    flex-direction: column;
    overflow: hidden;
    font-family: "Open Sans", "Noto Sans", sans-serif;
    font-size: 12px;
    line-height: 16px;
    color: #333;
    background-color: #f5f5f5;
}
h1, h2, p, ul {
    margin: 0;
    padding: 0;
    font-size: 12px;
    font-weight: normal;
}
button, select, input {
    font: inherit;
    color: inherit;
    margin: 0;
    padding: 0;
    border: none;
    background: none;
}
svg {
    display: block;
    flex: none;
}
.hidden {
    position: absolute;
    width: 1px;
    height: 1px;
    overflow: hidden;
    clip-path: inset(50%);
}

/* small triangles */
.caret {
    flex: none;
    display: block;
    width: 12px;
    height: 4px;
    background-color: #333;
    clip-path: polygon(3px 0, 9px 0, 6px 100%);
}
.caret-wide {
    height: 6px;
    clip-path: polygon(2px 0, 10px 0, 10px 1px, 2px 1px, 2px 2px, 10px 2px, 6px 100%);
}
.caret-gray {
    background-color: #888;
}
.caret-down {
    display: inline-block;
    width: 8px;
    height: 5px;
    margin-left: 3px;
    vertical-align: 2px;
    background-color: #333;
    clip-path: polygon(0 0, 100% 0, 50% 100%);
}

/* title bar */
.titlebar {
    height: 30px;
    flex: none;
    display: flex;
    align-items: flex-start;
    background-color: #d9d9d9;
}
.quick-access, .account, .window-buttons {
    height: 26px;
    display: flex;
    align-items: center;
}
.tool {
    display: flex;
    justify-content: center;
    align-items: center;
    min-width: 24px;
}
.tool-first {
    margin-left: 5px;
}
.sep {
    width: 1px;
    height: 22px;
    margin: 0 3px;
    background-color: #bbb;
}
.title {
    flex: 1;
    padding-top: 3px;
    text-align: center;
}
.account {
    margin-right: 57px;
}
.user {
    display: flex;
    align-items: center;
    gap: 2px;
    width: 86px;
    white-space: nowrap;
}
.caret-user {
    margin: 0 8px 0 20px;
}
.logo-letter {
    font: bold 15px "Open Sans", sans-serif;
    fill: #fff;
    text-anchor: middle;
}
.help-mark {
    font: bold 14px "Open Sans", sans-serif;
    fill: #1a4fd0;
    text-anchor: middle;
}

/* ribbon */
.ribbon-tabs {
    height: 21px;
    flex: none;
    display: flex;
    background-color: #d9d9d9;
}
.tab {
    padding: 0 9px 0 8px;
    white-space: nowrap;
}
.tab-file {
    width: 45px;
    margin-right: 3px;
    color: #fff;
    background-color: #2a7ab0;
}
.tab-active {
    background-color: #f5f5f5;
}
.tab-toggle {
    display: flex;
    align-items: center;
    margin-left: 24px;
}
.ribbon {
    position: relative;
    height: 100px;
    margin-bottom: 27px;
    flex: none;
    display: flex;
    border-bottom: 1px solid #d4d4d4;
}
.group {
    display: flex;
    flex-direction: column;
    justify-content: space-between;
    padding: 3px 1px 2px;
    border-right: 1px solid #e0e0e0;
    text-align: center;
}
.group-select { width: 57px; }
.group-build {
    width: 568px;
    padding-left: 4px;
}
.group-circulation { width: 140px; }
.group-model { width: 138px; }
.group-room { width: 300px; }
.group-opening { width: 210px; }
.group-datum { width: 83px; }
.group-plane {
    width: 160px;
    border-right: none;
}
.buttons {
    display: flex;
    justify-content: center;
}
.big {
    position: relative;
    display: flex;
    flex-direction: column;
    align-items: center;
    height: 75px;
    padding-top: 4px;
    line-height: 16px;
    white-space: nowrap;
}
.big:disabled {
    color: #bcbcbc;
}
.big svg {
    width: 32px;
    height: 32px;
    margin-bottom: 4px;
    fill: #e6e6e6;
    stroke: #bcbcbc;
}
.modify {
    width: 44px;
    border: 1px solid #7cc4e8;
    padding-top: 3px;
    background-color: #dcedf6;
}
.w38 { width: 38px; }
.w40 { width: 40px; }
.w42 { width: 42px; }
.w46 { width: 46px; }
.w50 { width: 50px; }
.w52 { width: 52px; }
.w54 { width: 54px; }
.w56 { width: 56px; }
.w58 { width: 58px; }
.w64 { width: 64px; }
.w86 { width: 86px; }
.drop {
    width: 6px;
    height: 4px;
    margin-top: 3px;
    background-color: #555;
    clip-path: polygon(0 0, 100% 0, 50% 100%);
}
.drop-side {
    position: absolute;
    right: 1px;
    top: 53px;
}
.balloon {
    position: absolute;
    left: 1532px;
    top: -29px;
}

/* panels */
.workspace {
    flex: 1;
    min-height: 0;
    display: flex;
    border-top: 1px solid #c4c4c4;
}
.panel-title {
    height: 19px;
    flex: none;
    display: flex;
    justify-content: space-between;
    align-items: center;
    padding: 0 2px;
    background-color: #d9d9d9;
    white-space: nowrap;
}
.close svg {
    stroke: #666;
    stroke-width: 2;
}
.left {
    width: 297px;
    flex: none;
    display: flex;
    flex-direction: column;
    border-right: 2px solid #c0c0c0;
    background-color: #efefef;
}
.properties {
    height: 441px;
    flex: none;
    display: flex;
    flex-direction: column;
    border-bottom: 1px solid #bbb;
}
.type-selector {
    height: 75px;
    margin: 0 2px 0 1px;
    display: flex;
    align-items: center;
    gap: 4px;
    padding: 2px 0 2px 2px;
    border: 1px solid #bbb;
    background-color: #f5f5f5;
}
.type-selector .caret {
    margin-left: auto;
}
.thumb {
    width: 66px;
    height: 69px;
    display: flex;
    align-items: center;
    justify-content: center;
    border: 1px solid #bbb;
}
.instance {
    height: 32px;
    display: flex;
    align-items: center;
    background-color: #f5f5f5;
}
select {
    appearance: none;
    background: url("data:image/svg+xml,%3Csvg xmlns='http://www.w3.org/2000/svg' viewBox='0 0 8 8'%3E%3Cpath d='M1 2l3 3 3-3' fill='none' stroke='%23888' stroke-width='2'/%3E%3C/svg%3E") no-repeat right 4px center / 8px 8px;
}
#instance {
    width: 211px;
    height: 26px;
    margin-left: 1px;
    padding-left: 4px;
    border-bottom: 1px solid #aaa;
}
.edit-type {
    display: flex;
    align-items: center;
    gap: 1px;
    margin-left: 5px;
    white-space: nowrap;
}
.grid-wrap {
    height: 287px;
    display: flex;
    justify-content: space-between;
    padding-right: 3px;
}
.grid-scroll {
    width: 274px;
    overflow: hidden;
}
.grid {
    width: 274px;
    height: 300px;
    table-layout: fixed;
    border-collapse: collapse;
    background-color: #fff;
    font-size: 11px;
}
.col-name { width: 132px; }
.col-value { width: 131px; }
.col-link { width: 11px; }
.grid td, .grid th {
    padding: 0 0 0 3px;
    font-weight: normal;
    text-align: left;
    line-height: 16px;
    white-space: nowrap;
    border-bottom: 1px dotted #ddd;
}
.grid th {
    font-size: 12px;
}
.grid td:first-child {
    padding-left: 9px;
}
.grid td + td {
    border-left: 1px dotted #ddd;
}
.grid .cat {
    background-color: #f3f3f3;
}
.grid .cat td {
    padding: 0;
    border-left: none;
}
.collapse {
    fill: none;
    stroke: #222;
    stroke-width: 1.5;
}
.grid .ro td {
    color: #999;
}
.grid .scale {
    padding-left: 6px;
}
.grid .has-button {
    padding: 0 1px;
}
.edit {
    display: block;
    width: 100%;
    height: 16px;
    line-height: 14px;
    border: 1px solid #aaa;
    background-color: #f5f5f5;
}
.grid input {
    appearance: none;
    display: block;
    width: 11px;
    height: 11px;
    margin-left: 2px;
    border: 1px solid #bbb;
    background-color: #fff;
}
.scrollbar {
    width: 17px;
    flex: none;
    display: flex;
    flex-direction: column;
    align-items: center;
    background-color: #e8e8e8;
}
.chev {
    width: 16px;
    height: 17px;
    padding: 3px;
    fill: none;
    stroke: #888;
    stroke-width: 2;
    background-color: #efefef;
}
.thumb-bar {
    width: 5px;
    border-radius: 2px;
    background-color: #ccc;
}
.thumb-bar + .chev {
    margin-top: auto;
}
.thumb-props { height: 139px; }
.thumb-tree {
    height: 60px;
    margin-top: 7px;
}
.thumb-sheet {
    height: 16px;
    margin-top: 392px;
}
.properties-foot {
    flex: 1;
    display: flex;
    justify-content: space-between;
    align-items: flex-start;
    padding: 1px 5px 0 1px;
}
.properties-foot a {
    color: #0f6cbd;
}
.apply {
    width: 70px;
    height: 20px;
    margin-top: 1px;
    border: 1px solid #ccc;
    color: #999;
}

/* project browser */
.browser {
    flex: 1;
    min-height: 0;
    display: flex;
    flex-direction: column;
}
.search-row {
    height: 41px;
    flex: none;
    padding: 8px 10px 8px 9px;
    background-color: #fff;
}
.search {
    display: flex;
    align-items: center;
    gap: 7px;
    height: 25px;
    padding-left: 8px;
    border: 1px solid #d8d8d8;
}
.search input {
    flex: 1;
    min-width: 0;
}
.search input::placeholder {
    color: #aaa;
}
.tree-wrap {
    flex: 1;
    min-height: 0;
    display: flex;
    padding-right: 3px;
    padding-bottom: 2px;
}
.tree {
    flex: 1;
    display: grid;
    grid-auto-rows: 1fr;
    list-style: none;
    color: #555;
    background-color: #fff;
}
.tree li {
    min-height: 0;
    display: flex;
    align-items: center;
    padding-left: 9px;
}
.tree .root {
    gap: 5px;
    padding-left: 6px;
    border: 1px solid #ddd;
    background-color: #f0f0f0;
}
.tree .hover {
    background-color: #f0f0f0;
}
.branch {
    width: 12px;
    height: 100%;
    border-left: 1px dashed #aaa;
    background: repeating-linear-gradient(to right, #aaa 0 3px, #fff 3px 5px) 0 50% / 8px 1px no-repeat;
}
.leaf .branch:first-child {
    width: 16px;
    background: none;
}
.leaf .branch + .branch {
    width: 30px;
    background-size: 25px 1px;
}
.last .branch + .branch {
    height: 50%;
    align-self: flex-start;
    background-position: 0 100%;
}
.minus, .plus {
    flex: none;
    width: 9px;
    height: 9px;
    background: linear-gradient(#666, #666) center / 9px 2px no-repeat;
}
.plus {
    background: linear-gradient(#666, #666) center / 9px 2px no-repeat, linear-gradient(#666, #666) center / 2px 9px no-repeat;
}
.branch + b {
    margin-right: 9px;
}
.view-icon {
    width: 16px;
    height: 16px;
    margin-right: 4px;
    padding: 1px;
    border: 1px dashed #444;
}
.view-icon::before {
    content: "";
    display: block;
    height: 100%;
    border: 1px solid #666;
    background-color: #f5f5f5;
}
.filled::before {
    border-color: #3d9ae0;
    background-color: #5fb0ea;
}

/* sheet view */
.center {
    flex: 1;
    min-width: 0;
    display: flex;
    flex-direction: column;
    padding-left: 2px;
    background-color: #fff;
}
.view-tabs {
    height: 24px;
    flex: none;
    display: flex;
    align-items: flex-start;
    margin-left: -2px;
    padding-left: 2px;
    border-bottom: 2px solid #fff;
    background-color: #cbcbcb;
}
.view-tab {
    width: 143px;
    height: 23px;
    display: flex;
    align-items: center;
    gap: 7px;
    padding-left: 3px;
    white-space: nowrap;
    color: #666;
}
.view-tab-active {
    width: 128px;
    padding-left: 5px;
    font-weight: 600;
    color: #444;
    background-color: #fff;
}
.tab-x {
    margin: 0 5px 0 auto;
    stroke: #666;
    stroke-width: 1.5;
}
.tabs-more {
    margin: 10px 4px 0 auto;
    background-color: #777;
}
.sheet-row {
    flex: 1;
    min-height: 0;
    display: flex;
}
.sheet-view {
    position: relative;
    flex: 1;
    min-width: 0;
    display: flex;
    overflow: hidden;
}
.drawing {
    width: 100%;
    height: 100%;
    font-family: "Liberation Sans", Arial, sans-serif;
}
.wall {
    fill: none;
    stroke: #000;
    stroke-width: 2;
}
.wall-small {
    stroke-width: 1.5;
}
.thin {
    stroke-width: 1;
}
.fixture {
    fill: #fff;
    stroke: #111;
}
.line {
    fill: none;
    stroke: #111;
}
.gray {
    stroke: #555;
}
.bubble {
    fill: #fff;
    stroke: #222;
}
.tag {
    font-size: 24px;
    text-anchor: middle;
}
.grid-name {
    font-size: 36px;
    text-anchor: middle;
}
.dim {
    font-size: 19px;
    text-anchor: middle;
    stroke: #000;
    stroke-width: 0.4;
}
.legend-title {
    font-size: 50px;
    text-anchor: end;
}
.legend {
    font-size: 35px;
}
.note {
    font-size: 28px;
    text-anchor: middle;
}
.markup {
    fill: none;
    stroke: #ff1a1a;
    stroke-width: 1.5;
}
.markup-text {
    font-size: 21px;
    fill: #ff1a1a;
}
.query {
    fill: #4a86d4;
    stroke: #2d5fa8;
}
.query-mark {
    font-size: 33px;
    font-weight: bold;
    text-anchor: middle;
    fill: #fff;
}
.query-small {
    font-size: 20px;
    font-weight: bold;
    text-anchor: middle;
    fill: #fff;
}
.tag-small {
    font-size: 16px;
    text-anchor: middle;
}
.note-small {
    font-size: 19px;
    text-anchor: middle;
}
.markup-small {
    font-size: 14px;
    fill: #ff1a1a;
}
.test {
    font-size: 14px;
}
.nav-bar {
    position: absolute;
    top: 0;
    right: 0;
    border: 1px solid #bbb;
    border-radius: 4px;
    background-color: #f2f2f2;
}
.nav-2d {
    font: bold 10px "Open Sans", sans-serif;
    text-anchor: middle;
    fill: #6a9fd4;
}
.view-controls {
    height: 20px;
    flex: none;
    display: flex;
    align-items: center;
    background-color: #f0f0f0;
    border-bottom: 2px solid #fff;
}
.view-controls .chev {
    height: 18px;
}
.view-controls .tool + .chev {
    margin-left: 2px;
}
.h-track {
    flex: 1;
    height: 18px;
    display: flex;
    align-items: center;
    justify-content: center;
    background-color: #e8e8e8;
}
.h-thumb {
    width: 17px;
    height: 5px;
    border-radius: 2px;
    background-color: #ccc;
}
.grip {
    width: 17px;
}

/* navigator */
.navigator {
    width: 440px;
    flex: none;
    display: flex;
    flex-direction: column;
    padding-left: 5px;
    border-left: 2px solid #c0c0c0;
    background: linear-gradient(to right, #efefef 5px, #fff 5px);
}
.navigator .panel-title {
    padding: 0;
}
.file-row {
    display: flex;
    justify-content: space-between;
    height: 17px;
    padding-right: 4px;
    color: #111;
}
.nav-tools {
    height: 27px;
    display: flex;
    align-items: center;
    padding-right: 2px;
    border-top: 1px solid #eee;
}
.tool-menu {
    display: flex;
    align-items: center;
    margin-left: 9px;
}
.tool-menu + .tool-menu {
    margin-left: 13px;
}
.file-box {
    flex: 1;
    height: 23px;
    display: flex;
    align-items: center;
    margin: 0 5px 0 4px;
    border: 1px solid #e4e4e4;
    color: #111;
}
.file-box select {
    flex: 1;
    min-width: 0;
    height: 21px;
    padding-left: 6px;
    background: none;
}
.caret-box {
    margin: 0 2px;
}
.nav-filter {
    height: 29px;
    display: flex;
    align-items: center;
    padding: 0 4px 0 8px;
    border-top: 1px solid #eee;
    border-bottom: 1px solid #eee;
}
.nav-filter button + button {
    margin-left: 8px;
}
.nav-filter .cloud {
    margin-left: -2px;
}
.nav-filter .prev {
    margin-left: 52px;
}
.state {
    width: 159px;
    text-align: center;
    color: #555;
}
.nav-filter .clear {
    margin-left: auto;
}
.issue {
    position: relative;
    display: flex;
    flex-direction: column;
    gap: 3px;
    height: 108px;
    padding: 5px 0 0 5px;
    color: #555;
}
.caption {
    margin-top: 3px;
}
.issue strong {
    font-size: 13px;
    color: #444;
}
.corner {
    position: absolute;
    top: 3px;
    right: 0;
}
.status-line {
    display: flex;
    align-items: center;
    padding-right: 10px;
}
.status-line p {
    flex: 1;
}
#status {
    width: 32px;
    margin-right: 4px;
    color: #2a7de1;
    background: none;
}
.tabs {
    display: flex;
    align-items: flex-end;
    height: 23px;
}
.page-tab {
    width: 68px;
    height: 21px;
    border: 1px solid #bbb;
    border-bottom: none;
    color: #222;
    background-color: #efefef;
}
.page-tab-active {
    width: 56px;
    height: 23px;
    background-color: #fff;
}
.tab-page {
    flex: 1;
    min-height: 0;
    display: flex;
    padding: 3px 3px 1px 2px;
    border: 1px solid #bbb;
    border-right: none;
}
.preview-box {
    flex: 1;
    min-width: 0;
    display: flex;
    flex-direction: column;
    border: 1px solid #ccc;
}
.preview-tools {
    height: 25px;
    flex: none;
    display: flex;
    align-items: center;
}
.pdf {
    flex: 1;
    display: flex;
    align-items: center;
    justify-content: center;
    gap: 2px;
    color: #555;
}
.zooms {
    width: 100px;
    height: 24px;
    display: flex;
    align-items: center;
    justify-content: space-around;
    border-left: 1px solid #e4e4e4;
}
.preview {
    position: relative;
    flex: 1;
    min-height: 0;
    overflow: hidden;
}
.zoom-level {
    position: absolute;
    left: 0;
    bottom: 0;
    font-weight: bold;
    color: #808080;
}
.nav-foot {
    height: 43px;
    flex: none;
    display: flex;
    justify-content: space-between;
    align-items: center;
    padding: 0 5px 0 3px;
    color: #222;
}
.logo-m {
    font: bold 23px "Open Sans", sans-serif;
    fill: #2d77e0;
    stroke: #2d77e0;
}
.logo-x {
    font: bold 17px "Open Sans", sans-serif;
    fill: #fff;
    stroke: #f59a1c;
}

/* status bar */
.statusbar {
    height: 23px;
    flex: none;
    display: flex;
    align-items: center;
    padding-top: 3px;
    background-color: #f4f4f4;
}
.ready {
    width: 894px;
    padding-left: 2px;
}
.status-center {
    display: flex;
    align-items: center;
    gap: 9px;
    margin-left: 202px;
    color: #999;
}
.small-chev {
    width: 8px;
    height: 8px;
    fill: none;
    stroke: #aaa;
    stroke-width: 2;
}
.requests, .filter {
    display: flex;
    align-items: center;
}
.requests {
    margin-right: 17px;
}
#model {
    width: 204px;
    opacity: 1;
}
.status-right {
    flex: 1;
    display: flex;
    align-items: center;
    justify-content: flex-end;
    gap: 8px;
    padding-right: 70px;
}
.arrow {
    fill: #fff;
    stroke: #333;
}
```
